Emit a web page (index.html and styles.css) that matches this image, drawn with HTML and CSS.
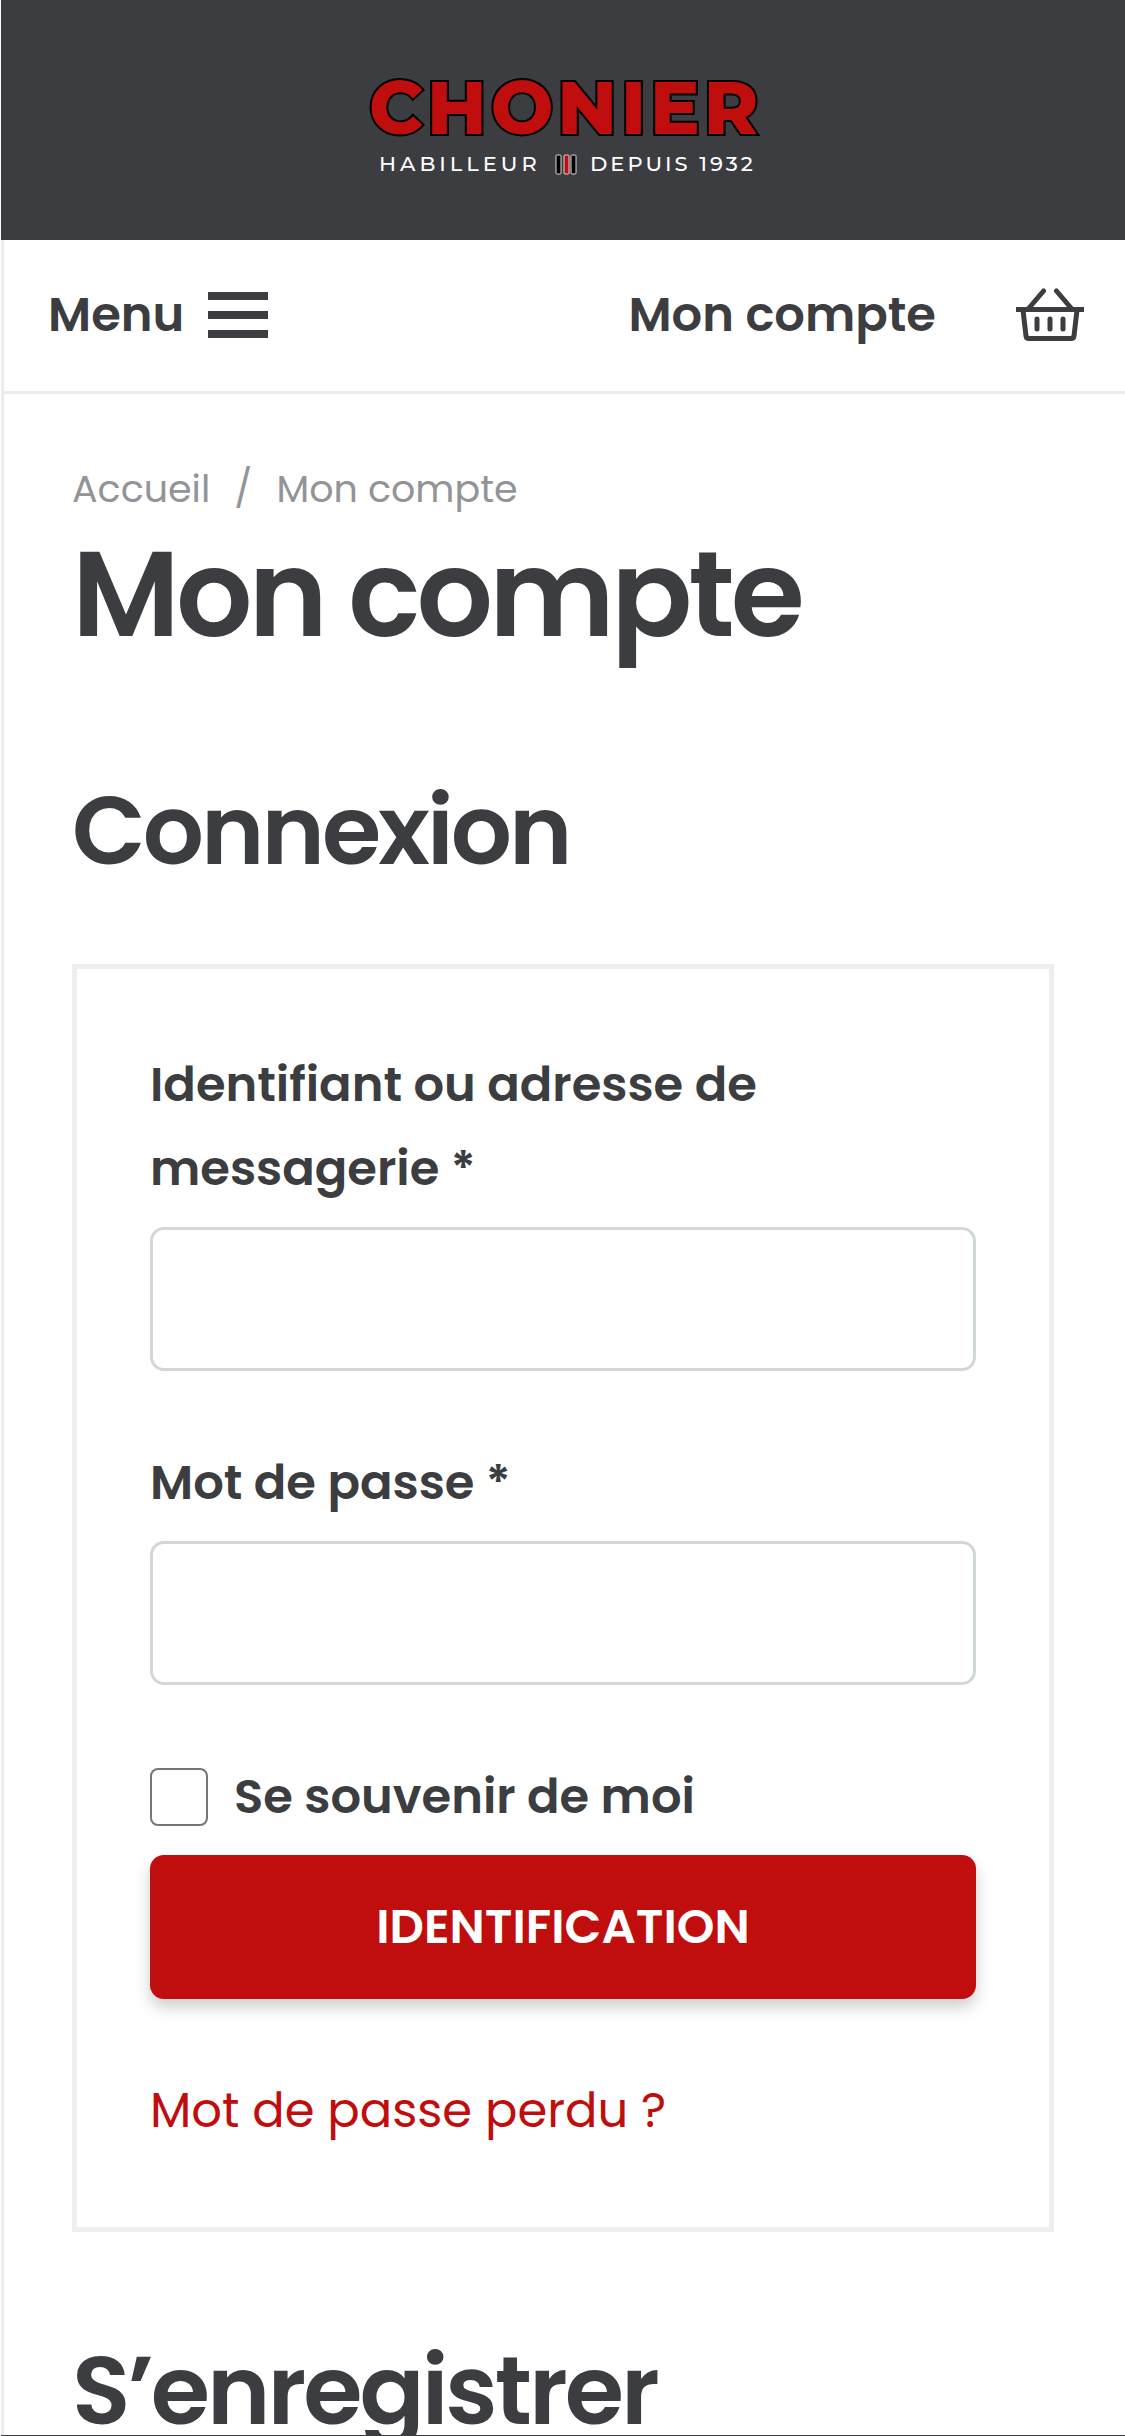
FILE: index.html
```
<!DOCTYPE html>
<html lang="fr">

<head>
    <meta charset="UTF-8">
    <meta name="viewport" content="width=device-width, initial-scale=1.0">
    <title>Mon compte - Chonier</title>
    <link rel="stylesheet" href="styles.css">
</head>

<body>
    <div class="page">
        <header class="top">
            <a href="#" aria-label="Chonier">
                <svg class="logo" width="400" height="140" viewBox="0 -15 400 140">
                    <text class="logo-name" x="6" y="69">CHONIER</text>
                    <text class="logo-tag habilleur" x="16" y="106">HABILLEUR</text>
                    <g stroke="#d8d8d8" stroke-width="1">
                        <rect x="193" y="90" width="5" height="19" rx="1" fill="#000" />
                        <rect x="201" y="90" width="5" height="19" rx="1" fill="#c00d0d" />
                        <rect x="208" y="90" width="5" height="19" rx="1" fill="#000" />
                    </g>
                    <text class="logo-tag" x="227" y="106">DEPUIS 1932</text>
                </svg>
            </a>
        </header>

        <nav>
            <button type="button" class="menu">
                Menu
                <span class="bars"><i></i><i></i><i></i></span>
            </button>
            <div class="nav-right">
                <a href="#">Mon compte</a>
                <a href="#" class="basket" aria-label="Panier">
                    <svg width="68" height="54" viewBox="0 0 68 54" fill="none" stroke="currentColor" stroke-width="5">
                        <path d="M0 21.5h68" />
                        <path d="M7 22l3 26q.4 2.500 3 2.500h42q2.600 0 3-2.500l3-26" />
                        <path d="M27.500 3L13 20M40.500 3L55 20M21 31v10M34 31v10M47 31v10" stroke-linecap="round" />
                    </svg>
                </a>
            </div>
        </nav>

        <main>
            <div class="breadcrumb">
                <a href="#">Accueil</a>
                <span class="sep">/</span>
                <span>Mon compte</span>
            </div>
            <h1>Mon compte</h1>

            <h2>Connexion</h2>
            <form class="login">
                <label for="username">Identifiant ou adresse de messagerie *</label>
                <input type="text" id="username" class="field">

                <label for="password">Mot de passe *</label>
                <input type="password" id="password" class="field">

                <label class="remember">
                    <input type="checkbox">
                    Se souvenir de moi
                </label>
                <button type="submit" class="submit">IDENTIFICATION</button>
                <a href="#" class="lost">Mot de passe perdu ?</a>
            </form>

            <h2>S’enregistrer</h2>
        </main>
    </div>
</body>

</html>
```

FILE: styles.css
```
* {
    margin: 0;
    padding: 0;
    box-sizing: border-box;
}

body {
    background: #fff;
    color: #3c3d41;
    font-family: 'Poppins', 'Inter', sans-serif;
    font-size: 48px;
    line-height: 84px;
}

a {
    color: inherit;
    text-decoration: none;
}

.page {
    height: 100vh;
    margin-left: 1px;
    overflow: hidden;
    border-bottom: 1px solid #3c3d41;
}

.top {
    height: 240px;
    display: flex;
    align-items: center;
    justify-content: center;
    background: #3c3d41;
}

.top a {
    display: flex;
}

.logo {
    font-family: 'Montserrat', 'Inter', sans-serif;
}

.logo-name {
    font-size: 74px;
    font-weight: 800;
    letter-spacing: 4px;
    fill: #c00d0d;
    stroke: #000;
    stroke-width: 4px;
    paint-order: stroke;
}

.logo-tag {
    font-size: 21px;
    font-weight: 500;
    letter-spacing: 3px;
    fill: #fff;
}

.habilleur {
    letter-spacing: 4px;
}

nav {
    height: 154px;
    padding: 0 41px 1px 44px;
    display: flex;
    align-items: center;
    justify-content: space-between;
    border-left: 3px solid #ebebeb;
    border-bottom: 3px solid #ebebeb;
    font-weight: 600;
}

.menu {
    display: flex;
    align-items: center;
    gap: 24px;
    border: none;
    background: none;
    color: inherit;
    font: inherit;
}

.bars {
    width: 60px;
    display: grid;
    gap: 11px;
}

.bars i {
    height: 8px;
    background: #3c3d41;
}

.nav-right {
    display: flex;
    align-items: center;
    gap: 80px;
}

.basket {
    display: flex;
}

main {
    padding: 64px 71px 0 68px;
    border-left: 3px solid #ebebeb;
}

.breadcrumb {
    display: flex;
    gap: 24px;
    margin-bottom: 4px;
    font-size: 38px;
    line-height: 62px;
    color: #929497;
}

h1 {
    margin-bottom: 107px;
    font-size: 120px;
    font-weight: 600;
    line-height: 140px;
    letter-spacing: -4px;
}

h2 {
    margin-bottom: 73px;
    font-size: 96px;
    font-weight: 600;
    line-height: 120px;
    letter-spacing: -3px;
}

.login {
    margin-bottom: 99px;
    padding: 74px 73px;
    border: 5px solid #eee;
}

.login label {
    display: block;
    font-weight: 600;
}

.field {
    display: block;
    width: 100%;
    height: 144px;
    margin: 16px 0 70px;
    padding: 0 36px;
    border: 3px solid #d1d7da;
    border-radius: 14px;
    font: inherit;
    color: inherit;
}

.login .remember {
    display: flex;
    align-items: center;
    gap: 26px;
}

.remember input {
    appearance: none;
    width: 58px;
    height: 58px;
    border: 2px solid #767676;
    border-radius: 8px;
    background: #fff;
}

.submit {
    display: block;
    width: 100%;
    height: 144px;
    margin: 16px 0 70px;
    border: none;
    border-radius: 14px;
    background: #c00d0d;
    box-shadow: 0 8px 16px rgba(0, 0, 0, 0.2);
    color: #fff;
    font: inherit;
    font-weight: 600;
}

.lost {
    display: block;
    color: #c00d0d;
}
```
